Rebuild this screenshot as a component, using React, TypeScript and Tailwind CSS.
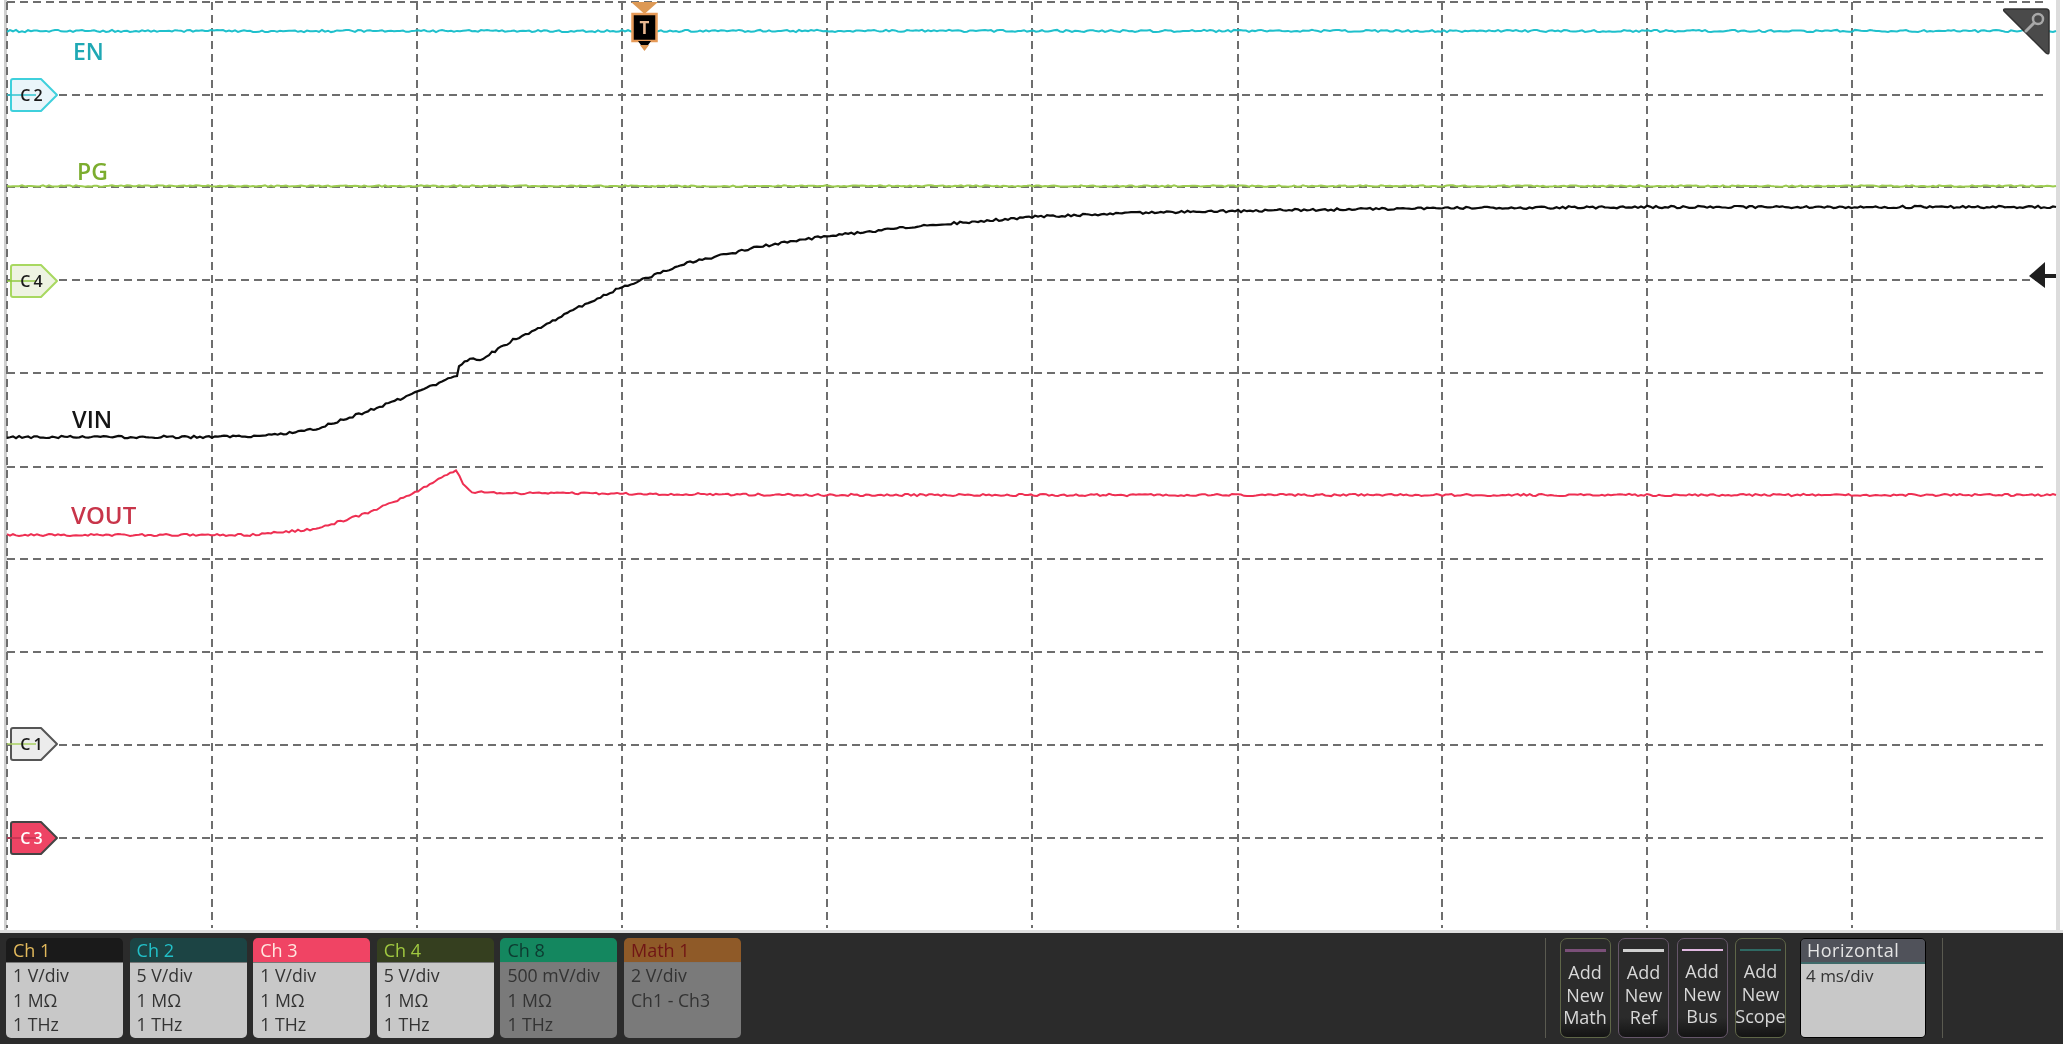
const W = 2063
const H = 933

// vertical and horizontal graticule, 205 and 93 px per division
const vLines = [7, 212, 417, 622, 827, 1032, 1238, 1442, 1647, 1852]
const hLines = [2, 95, 187, 280, 373, 467, 559, 652, 745, 838]

const rnd = (seed: number) => {
  let s = seed
  return () => {
    s = (s * 16807) % 2147483647
    return (s % 1000) / 1000 - 0.5
  }
}

// walk through the anchor points and add a little scope noise
const trace = (pts: number[][], amp: number, seed: number) => {
  const r = rnd(seed)
  const out: string[] = []
  for (let i = 0; i < pts.length - 1; i++) {
    const [x0, y0] = pts[i]
    const [x1, y1] = pts[i + 1]
    const steps = Math.max(1, Math.round((x1 - x0) / 3))
    for (let k = 0; k < steps; k++) {
      const t = k / steps
      const n = r() * amp
      out.push(`${(x0 + (x1 - x0) * t).toFixed(1)},${(y0 + (y1 - y0) * t + n).toFixed(1)}`)
    }
  }
  const last = pts[pts.length - 1]
  out.push(`${last[0]},${last[1]}`)
  return out.join(' ')
}

const vin = [
  [7, 437], [212, 437], [263, 436], [316, 429], [368, 411], [418, 392], [457, 375], [459, 365], [470, 359],
  [480, 360], [513, 340], [535, 330], [579, 307], [622, 287], [684, 264], [763, 246], [827, 236], [921, 226],
  [1032, 217], [1131, 213], [1238, 211], [1442, 208], [1647, 207], [2056, 207],
]
const vout = [
  [7, 535], [250, 535], [316, 529], [368, 513], [418, 491], [456, 470], [463, 483], [472, 492], [500, 493],
  [827, 495], [1238, 495], [1647, 495], [2056, 495],
]

const markers = [
  { y: 95, label: 'C2', fill: '#eaf5fa', stroke: '#3fd0dc', line: '#30c4d0', text: '#1a1a1a' },
  { y: 281, label: 'C4', fill: '#eef3e2', stroke: '#a8d860', line: '#90c840', text: '#1a1a1a' },
  { y: 744, label: 'C1', fill: '#ececec', stroke: '#555555', line: '#a8d060', text: '#1a1a1a' },
  { y: 838, label: 'C3', fill: '#ee4464', stroke: '#444444', line: '#c03050', text: '#ffffff' },
]

const channels = [
  { name: 'Ch 1', head: 'bg-[#1a1a1a] text-[#e2b95c]', body: 'bg-[#c8c8c8] text-[#333333]', rows: ['1 V/div', '1 MΩ', '1 THz'] },
  { name: 'Ch 2', head: 'bg-[#1c4444] text-[#22c0c8]', body: 'bg-[#c8c8c8] text-[#333333]', rows: ['5 V/div', '1 MΩ', '1 THz'] },
  { name: 'Ch 3', head: 'bg-[#f04464] text-[#ffe8e0]', body: 'bg-[#c8c8c8] text-[#333333]', rows: ['1 V/div', '1 MΩ', '1 THz'] },
  { name: 'Ch 4', head: 'bg-[#353f1f] text-[#a0c840]', body: 'bg-[#c8c8c8] text-[#333333]', rows: ['5 V/div', '1 MΩ', '1 THz'] },
  { name: 'Ch 8', head: 'bg-[#14875f] text-[#0d3a30]', body: 'bg-[#7a7a7a] text-[#333333]', rows: ['500 mV/div', '1 MΩ', '1 THz'] },
  { name: 'Math 1', head: 'bg-[#8f5a28] text-[#701515]', body: 'bg-[#7a7a7a] text-[#333333]', rows: ['2 V/div', 'Ch1 - Ch3'] },
]

const addButtons = [
  { label: 'Math', bar: 'bg-[#7a4f78] h-[3px]', border: 'border-[#5f6648]' },
  { label: 'Ref', bar: 'bg-[#d0d0d0] h-[3px]', border: 'border-[#66566a]' },
  { label: 'Bus', bar: 'bg-[#e0b8e0] h-[2px]', border: 'border-[#66566a]' },
  { label: 'Scope', bar: 'bg-[#2f6a64] h-[2px]', border: 'border-[#5f6648]' },
]

const Plot = () => (
  <svg viewBox={`0 0 ${W} ${H}`} width={W} height={H} className="block bg-white shrink-0">
    <rect x="4" y="0" width="3" height={H} fill="#d0d0d0" />
    <rect x="2056" y="0" width="4" height={H} fill="#dcdcdc" />
    <rect x="0" y="930" width={W} height="3" fill="#dedede" />

    {hLines.map((y) => (
      <line key={y} x1="7" x2="2046" y1={y} y2={y} stroke="#6e6e6e" strokeWidth="2" strokeDasharray="8 5" />
    ))}
    {vLines.map((x) => (
      <line key={x} x1={x} x2={x} y1="2" y2="928" stroke="#6e6e6e" strokeWidth="2" strokeDasharray="8 5" />
    ))}

    <polyline points={trace([[7, 31], [2056, 31]], 2.2, 11)} fill="none" stroke="#1fc0cc" strokeWidth="2" />
    <polyline points={trace([[7, 186], [2056, 186]], 1.4, 23)} fill="none" stroke="#9ccc50" strokeWidth="2" />
    <polyline points={trace(vin, 2.4, 37)} fill="none" stroke="#0c0c0c" strokeWidth="2.2" />
    <polyline points={trace(vout, 2.2, 51)} fill="none" stroke="#ee2f52" strokeWidth="2" />

    <g fontFamily="'Open Sans', sans-serif" fontWeight="600">
      <text x="73" y="60" fontSize="23" fill="#1fa8b4">EN</text>
      <text x="77" y="180" fontSize="23" fill="#7cad2f">PG</text>
      <text x="72" y="428" fontSize="23.5" fill="#151515">VIN</text>
      <text x="71" y="524" fontSize="24" fill="#c8354a">VOUT</text>
    </g>

    {markers.map((m) => (
      <g key={m.label}>
        <path
          d={`M13 ${m.y - 16} H41 L57 ${m.y} L41 ${m.y + 16} H13 Q11 ${m.y + 16} 11 ${m.y + 14} V${m.y - 14} Q11 ${m.y - 16} 13 ${m.y - 16} Z`}
          fill={m.fill}
          stroke={m.stroke}
          strokeWidth="2"
          strokeLinejoin="round"
        />
        <line x1="7" x2="36" y1={m.y} y2={m.y} stroke={m.line} strokeWidth="1.5" />
        <text
          x="33"
          y={m.y + 6}
          textAnchor="middle"
          fontFamily="'Open Sans', sans-serif"
          fontSize="16"
          fontWeight="600"
          letterSpacing="3"
          fill={m.text}
        >
          {m.label}
        </text>
      </g>
    ))}

    {/* trigger flag */}
    <polygon points="631,2 658,2 644.5,14" fill="#dd9955" />
    <rect x="632.5" y="14" width="24" height="27" fill="#000000" stroke="#e69a58" strokeWidth="2.5" />
    <polygon points="638,41 651,41 644.5,50" fill="#000000" />
    <polygon points="640,45 649,45 644.5,51" fill="#dd9955" />
    <text x="644.5" y="34" textAnchor="middle" fontFamily="'Open Sans', sans-serif" fontSize="17" fontWeight="700" fill="#e8b890">T</text>

    {/* zoom corner */}
    <path d="M2005 9 H2046 Q2049 9 2049 12 V52 Q2049 55 2046 53 L2004 11 Q2003 9 2005 9 Z" fill="#4a4a4a" stroke="#333333" strokeWidth="1.5" />
    <circle cx="2038" cy="19" r="5" fill="none" stroke="#a8a8a8" strokeWidth="2.5" />
    <line x1="2034" y1="23" x2="2026" y2="31" stroke="#a8a8a8" strokeWidth="3" strokeLinecap="round" />

    {/* ref level arrow */}
    <polygon points="2029,276 2045,262 2045,288" fill="#1f1f1f" />
    <rect x="2044" y="274" width="12" height="4" fill="#1f1f1f" />
  </svg>
)

const ChannelChip = ({ c }: { c: (typeof channels)[number] }) => (
  <div className="w-[117px] h-[100px] rounded-[5px] overflow-hidden flex flex-col">
    <div className={`${c.head} h-[24px] px-[7px] leading-[25px] text-[18px] border-b-2 border-[#777777] box-content`}>
      {c.name}
    </div>
    <div className={`${c.body} flex-1 px-[7px] -mt-px text-[17.7px] leading-[24.5px]`}>
      {c.rows.map((r) => (
        <div key={r}>{r}</div>
      ))}
    </div>
  </div>
)

const AddButton = ({ b }: { b: (typeof addButtons)[number] }) => (
  <div className={`w-[51px] h-[100px] rounded-[7px] border ${b.border} bg-gradient-to-b from-[#2b2b2b] from-80% to-[#141414] flex flex-col items-center pt-[10px]`}>
    <div className={`${b.bar} w-[41px] mb-[9px]`} />
    <div className="text-[#d8d8d8] text-[18px] leading-[22.5px] text-center whitespace-nowrap">
      <div>Add</div>
      <div>New</div>
      <div>{b.label}</div>
    </div>
  </div>
)

export default function App() {
  return (
    <div className="w-[2063px] h-[1044px] overflow-hidden flex flex-col bg-[#2b2b2b] font-['Open_Sans',sans-serif] blur-[0.4px]">
      <Plot />

      <div className="flex-1 flex items-start pt-[5px] pl-[6px] pr-[120px]">
        <div className="flex gap-[6.6px]">
          {channels.map((c) => (
            <ChannelChip key={c.name} c={c} />
          ))}
        </div>

        <div className="ml-auto flex items-start">
          <div className="w-px h-[100px] bg-[#5a5a50] mr-[14px]" />
          <div className="flex gap-[7.5px] mr-[14px]">
            {addButtons.map((b) => (
              <AddButton key={b.label} b={b} />
            ))}
          </div>
          <div className="w-[126px] h-[100px] rounded-[5px] overflow-hidden flex flex-col border border-black">
            <div className="h-[23px] px-[6px] leading-[23px] text-[18px] tracking-[0.5px] bg-[#50525a] text-[#e4e4e4] border-b-2 border-[#3f6a6a] box-content">
              Horizontal
            </div>
            <div className="flex-1 bg-[#c8c8c8] text-[#333333] px-[5px] text-[17px] leading-[24px]">4 ms/div</div>
          </div>
          <div className="w-px h-[100px] bg-[#5a5a50] ml-[16px]" />
        </div>
      </div>
    </div>
  )
}
